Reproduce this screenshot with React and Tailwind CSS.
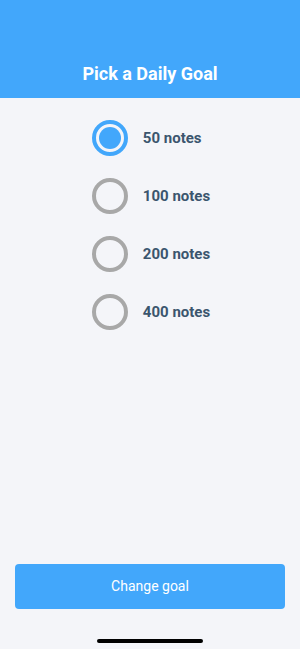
export default function App() {
  const options = ["50 notes", "100 notes", "200 notes", "400 notes"];
  const selected = 0;
  return (
    <div
      className="relative flex h-[649px] w-full flex-col bg-[#f4f5f9]"
      style={{ fontFamily: "Roboto, 'Liberation Sans', sans-serif" }}
    >
      <div className="flex h-[98px] items-end justify-center bg-[#42a7fb] pb-[12px]">
        <h1 className="text-[18px] font-bold leading-[24px] text-white">Pick a Daily Goal</h1>
      </div>
      <div className="mx-auto mt-[11px] flex w-fit translate-x-[1px] flex-col">
        {options.map((o, i) => (
          <div key={o} className="flex h-[58px] items-center gap-[15px]">
            {i === selected ? (
              <div className="flex h-[36px] w-[36px] items-center justify-center rounded-full border-[4px] border-[#42a7fb]">
                <div className="h-[22px] w-[22px] rounded-full bg-[#42a7fb]" />
              </div>
            ) : (
              <div className="h-[36px] w-[36px] rounded-full border-[4px] border-[#a8a8a8]" />
            )}
            <span className="text-[15px] font-bold text-[#3b556e]">{o}</span>
          </div>
        ))}
      </div>
      <div className="flex-1" />
      <div className="px-[15px] pb-[40px]">
        <button className="flex h-[45px] w-full items-center justify-center rounded-[4px] bg-[#42a7fb] text-[14px] text-white">
          Change goal
        </button>
      </div>
      <div className="absolute bottom-[6px] left-[97px] h-[4px] w-[106px] rounded-full bg-black" />
    </div>
  );
}
